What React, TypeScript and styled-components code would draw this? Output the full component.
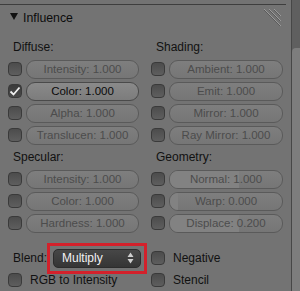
import React from "react";
import styled, { createGlobalStyle } from "styled-components";

const Global = createGlobalStyle`
  html, body {
    margin: 0;
    padding: 0;
    background: #737373;
    overflow: hidden;
  }
  body {
    font-family: "Liberation Sans", Arial, sans-serif;
  }
`;

function Influence() {
  const diffuse = [
    { label: "Intensity: 1.000", on: false },
    { label: "Color: 1.000", on: true },
    { label: "Alpha: 1.000", on: false },
    { label: "Translucen: 1.000", on: false },
  ];
  const shading = ["Ambient: 1.000", "Emit: 1.000", "Mirror: 1.000", "Ray Mirror: 1.000"];
  const specular = ["Intensity: 1.000", "Color: 1.000", "Hardness: 1.000"];
  const geometry = [
    { label: "Normal: 1.000", fill: 62 },
    { label: "Warp: 0.000", fill: 7 },
    { label: "Displace: 0.200", fill: 62 },
  ];

  return (
    <Screen>
      <Global />
      <Panel>
        <Header>
          <Arrow />
          <Title>Influence</Title>
          <Grip width="20" height="19" viewBox="0 0 20 19">
            <path d="M1 1 L18 18 M6 1 L18 13 M11 1 L18 8" stroke="#9a9a9a" strokeWidth="1" />
            <path d="M1 2 L17 18 M6 2 L17 13 M11 2 L17 8" stroke="#5a5a5a" strokeWidth="1" />
          </Grip>
        </Header>
        <Columns>
          <Column>
            <Label>Diffuse:</Label>
            {diffuse.map((d) => (
              <Row key={d.label}>
                <Check $on={d.on}>{d.on && <Tick />}</Check>
                <Slider $active={d.on}>{d.label}</Slider>
              </Row>
            ))}
            <Label>Specular:</Label>
            {specular.map((s) => (
              <Row key={s}>
                <Check />
                <Slider>{s}</Slider>
              </Row>
            ))}
          </Column>
          <Column>
            <Label>Shading:</Label>
            {shading.map((s) => (
              <Row key={s}>
                <Check />
                <Slider>{s}</Slider>
              </Row>
            ))}
            <Label>Geometry:</Label>
            {geometry.map((g) => (
              <Row key={g.label}>
                <Check />
                <Slider>
                  <Fill style={{ width: `${g.fill}%` }} />
                  <SliderText>{g.label}</SliderText>
                </Slider>
              </Row>
            ))}
          </Column>
        </Columns>
        <Options>
          <Column>
            <Row>
              <BlendLabel>Blend:</BlendLabel>
              <Highlight>
                <Dropdown>
                  <span>Multiply</span>
                  <Updown width="7" height="12" viewBox="0 0 7 12">
                    <path d="M3.5 0.5 L6.5 5 L0.5 5 Z M3.5 11.5 L6.5 7 L0.5 7 Z" fill="#cfcfcf" />
                  </Updown>
                </Dropdown>
              </Highlight>
            </Row>
            <Row>
              <Check />
              <Option>RGB to Intensity</Option>
            </Row>
          </Column>
          <Column>
            <Row>
              <Check />
              <Option>Negative</Option>
            </Row>
            <Row>
              <Check />
              <Option>Stencil</Option>
            </Row>
          </Column>
        </Options>
      </Panel>
      <Scroll>
        <Thumb />
      </Scroll>
    </Screen>
  );
}

function Tick() {
  return (
    <svg width="12" height="11" viewBox="0 0 12 11">
      <path d="M1.5 5.5 L4.5 8.5 L10.5 1.5" stroke="#f0f0f0" strokeWidth="1.8" fill="none" />
    </svg>
  );
}

const Screen = styled.div`
  display: flex;
  width: 300px;
  height: 291px;
  overflow: hidden;
`;

const Panel = styled.div`
  width: 292px;
  display: flex;
  flex-direction: column;
  padding-top: 4px;
`;

const Header = styled.div`
  display: flex;
  align-items: center;
  height: 28px;
  margin-right: 5px;
  border-top: 1px solid #3e3e3e;
  padding-left: 10px;
`;

const Arrow = styled.div`
  width: 0;
  height: 0;
  border-left: 4px solid transparent;
  border-right: 4px solid transparent;
  border-top: 7px solid #111;
  margin-top: -3px;
`;

const Title = styled.div`
  margin-left: 5px;
  margin-top: -1px;
  font-size: 12.3px;
  color: #0c0c0c;
`;

const Grip = styled.svg`
  margin-left: auto;
  margin-right: 3px;
  align-self: flex-start;
  margin-top: 3px;
`;

const Columns = styled.div`
  display: grid;
  grid-template-columns: 131px 132px;
  column-gap: 12px;
  padding-left: 8px;
  margin-top: 5px;
`;

const Column = styled.div`
  display: flex;
  flex-direction: column;
`;

const Label = styled.div`
  height: 22px;
  line-height: 22px;
  padding-left: 5px;
  font-size: 12px;
  color: #111;
`;

const Row = styled.div`
  display: flex;
  align-items: center;
  height: 22px;
  gap: 4px;
`;

const Check = styled.div<{ $on?: boolean }>`
  width: 14px;
  height: 14px;
  box-sizing: border-box;
  flex: none;
  border-radius: 4px;
  border: 1px solid #3a3a3a;
  background: ${(p) =>
    p.$on ? "linear-gradient(#3a3a3a, #4a4a4a)" : "linear-gradient(#4c4c4c, #5e5e5e)"};
  display: flex;
  align-items: center;
  justify-content: center;
`;

const Slider = styled.div<{ $active?: boolean }>`
  position: relative;
  flex: 1;
  height: 19px;
  box-sizing: border-box;
  border-radius: 9px;
  border: 1px solid ${(p) => (p.$active ? "#4a4a4a" : "#5a5a5a")};
  background: ${(p) =>
    p.$active ? "linear-gradient(#8a8a8a, #7c7c7c)" : "linear-gradient(#7e7e7e, #767676)"};
  overflow: hidden;
  display: flex;
  align-items: center;
  justify-content: center;
  font-size: 11.5px;
  color: ${(p) => (p.$active ? "#0a0a0a" : "#4c4c4c")};
  white-space: nowrap;
`;

const Fill = styled.div`
  position: absolute;
  left: 0;
  top: 0;
  bottom: 0;
  background: #828282;
`;

const SliderText = styled.span`
  position: relative;
`;

const Options = styled.div`
  display: grid;
  grid-template-columns: 131px 132px;
  column-gap: 12px;
  padding-left: 8px;
  margin-top: 13px;
`;

const BlendLabel = styled.div`
  width: 35px;
  flex: none;
  padding-left: 5px;
  box-sizing: border-box;
  font-size: 12px;
  color: #111;
`;

const Highlight = styled.div`
  flex: none;
  width: 100px;
  margin-right: -8px;
  box-sizing: border-box;
  border: 3px solid #d3212b;
  padding: 3px;
`;

const Dropdown = styled.div`
  height: 19px;
  box-sizing: border-box;
  border-radius: 5px;
  border: 1px solid #2c2c2c;
  background: linear-gradient(#474747, #353535);
  display: flex;
  align-items: center;
  padding: 0 6px 0 8px;
  font-size: 12px;
  color: #f2f2f2;
`;

const Updown = styled.svg`
  margin-left: auto;
`;

const Option = styled.div`
  margin-left: 4px;
  font-size: 12px;
  color: #111;
`;

const Scroll = styled.div`
  width: 8px;
  border-left: 1px solid #474747;
  background: #5f5f5f;
  display: flex;
  flex-direction: column;
`;

const Thumb = styled.div`
  margin-top: 48px;
  flex: 1;
  background: #7d7d7d;
  border-top-left-radius: 4px;
`;

export default Influence;
